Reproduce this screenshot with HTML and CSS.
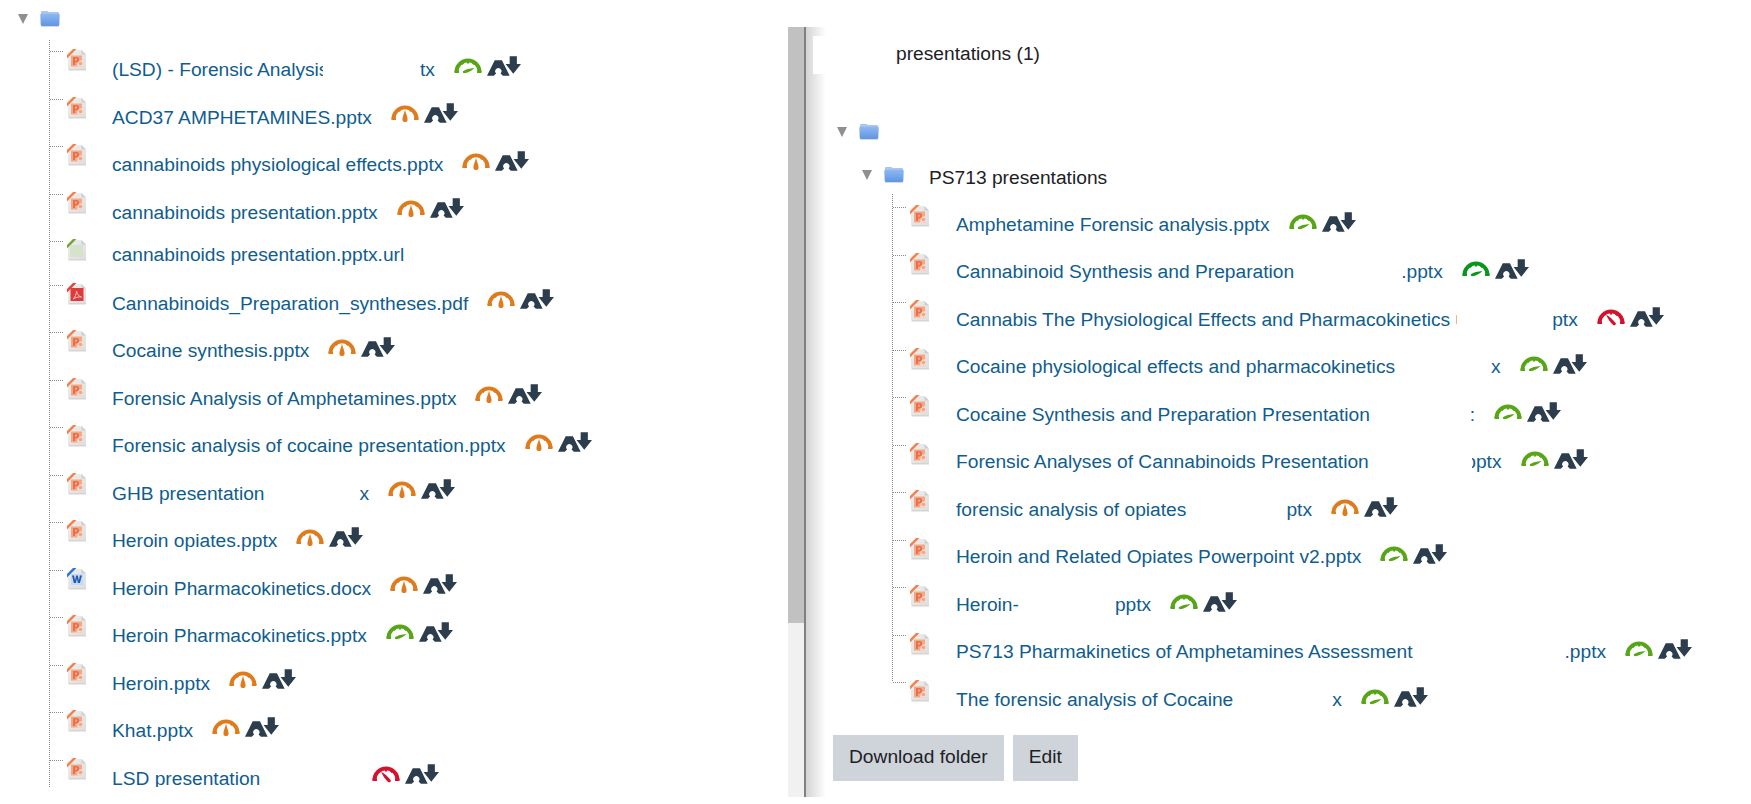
FILE: index.html
```html
<!DOCTYPE html>
<html lang="en">
<head>
    <meta charset="UTF-8">
    <meta name="viewport" content="width=device-width, initial-scale=1.0">
    <title>Folder</title>
    <link rel="stylesheet" href="styles.css">
</head>
<body>
    <svg class="defs" width="0" height="0">
        <defs>
            <linearGradient id="folder-body" x1="0" y1="0" x2="0" y2="1">
                <stop offset="0" stop-color="#8fb8f2"/>
                <stop offset="1" stop-color="#5f95e2"/>
            </linearGradient>
            <linearGradient id="file-page" x1="0" y1="0" x2="1" y2="1">
                <stop offset="0" stop-color="#eeeeee"/>
                <stop offset="1" stop-color="#dedede"/>
            </linearGradient>
        </defs>
        <symbol id="folder" viewBox="0 0 20 17">
            <path d="M1 5V2.200C1 1.500 1.500 1 2.200 1h5c.6 0 1 .3 1.300 1h9.300c.7 0 1.200.5 1.200 1.200V5z" fill="#a9c6ee"/>
            <path d="M.3 5c0-.7.5-1.200 1.200-1.200h17c.7 0 1.200.5 1.200 1.200l-.4 9.800c0 .7-.5 1.200-1.200 1.200H1.900c-.7 0-1.200-.5-1.200-1.200z" fill="url(#folder-body)"/>
            <path d="M1 16h18v1H1z" fill="#d5dbe5"/>
        </symbol>
        <symbol id="file-base" viewBox="0 0 20 22">
            <path d="M1 7.500 8 1h6.500L19 5.500V20H1z" fill="url(#file-page)"/>
            <path d="M1.500 20H19v1.500H1.500z" fill="#d4d4d4"/>
            <path d="M14.500 1v4.500H19z" fill="#cfcfcf"/>
        </symbol>
        <symbol id="file-ppt" viewBox="0 0 20 22">
            <use href="#file-base"/>
            <path d="M0 6 6 0h3.500L0 9.500z" fill="#f2814d"/>
            <path d="M4 6.500h11v11H4z" fill="#f6a886"/>
            <path d="M11 11.500h4v6h-5z" fill="#fbdccd"/>
            <path d="M6 8v8h2v-2.600h1.500c1.800 0 2.700-1 2.700-2.700S11.300 8 9.500 8zm2 1.600h1.200c.7 0 1 .4 1 1.100s-.3 1.100-1 1.100H8z" fill="#e8704a"/>
            <circle cx="13.500" cy="14.500" r="1.800" fill="#f4a585"/>
        </symbol>
        <symbol id="file-url" viewBox="0 0 20 22">
            <use href="#file-base"/>
            <path d="M0 6 6 0h3.500L0 9.500z" fill="#6fa53a"/>
            <path d="M3 6h13v12H3z" fill="#d5e3ca"/>
        </symbol>
        <symbol id="file-pdf" viewBox="0 0 20 22">
            <use href="#file-base"/>
            <path d="M0 6 6 0h3.500L0 9.500z" fill="#ea3f3f"/>
            <path d="M3.500 5h13v13h-13z" fill="#dd3a3a"/>
            <path d="M6 16c2-1.500 3.500-5 3.500-8 .5 3 2 5 5 6-3-.3-5.500.2-8.500 2z" fill="none" stroke="#f7c6c6" stroke-width="1"/>
        </symbol>
        <symbol id="file-doc" viewBox="0 0 20 22">
            <use href="#file-base"/>
            <path d="M0 6 6 0h3.500L0 9.500z" fill="#2f76c9"/>
            <path d="M4 6h12v11H4z" fill="#c7d9f2"/>
            <path d="M5 7.500h2l1 5 1.200-5h1.500l1.200 5 1-5h2l-2 7.500h-2l-1-4.500L8.900 15h-2z" fill="#1f57ad"/>
        </symbol>
        <symbol id="gauge-fast" viewBox="0 0 28 18">
            <path d="M2.400 15a11.600 11.600 0 0 1 23.200 0" fill="none" stroke="currentColor" stroke-width="3.800"/>
            <path d="M.5 13.500H5V16H.5zM23 13.500h4.500V16H23zM6 5.500l2-2 2.300 2.500-2 1.900zM12.900 3h2.200v3.400h-2.200zM22 5.500l-2-2-2.300 2.500 2 1.900z" fill="currentColor"/>
            <path d="M10 16.200c-1.300 0-1.700-1.400-.7-2.100 2-1.400 6.500-2.700 11.200-3-2.800 2.700-6.700 5.100-10.500 5.100z" fill="currentColor"/>
        </symbol>
        <symbol id="gauge-mid" viewBox="0 0 28 18">
            <path d="M2.400 15a11.600 11.600 0 0 1 23.200 0" fill="none" stroke="currentColor" stroke-width="3.800"/>
            <path d="M.5 13.500H5V16H.5zM23 13.500h4.500V16H23zM6 5.500l2-2 2.300 2.500-2 1.900zM22 5.500l-2-2-2.300 2.500 2 1.900z" fill="currentColor"/>
            <path d="M14 5.500c.6 3.700 2.600 7.300 2.600 10a2.600 2.600 0 0 1-5.200 0c0-2.700 2-6.300 2.600-10z" fill="currentColor"/>
        </symbol>
        <symbol id="gauge-slow" viewBox="0 0 28 18">
            <path d="M2.400 15a11.600 11.600 0 0 1 23.200 0" fill="none" stroke="currentColor" stroke-width="3.800"/>
            <path d="M.5 13.500H5V16H.5zM23 13.500h4.500V16H23zM12.900 3h2.200v3.400h-2.200zM22 5.500l-2-2-2.300 2.500 2 1.900z" fill="currentColor"/>
            <path d="M9 6.500c3.400 2 7.400 5.500 9.600 8.400 1.100 1.500-1 3.200-2.500 2C13.200 14.700 10.500 10 9 6.500z" fill="currentColor"/>
        </symbol>
        <symbol id="ally" viewBox="0 0 33 19">
            <path d="M0 19 7.500 4h7L22 19h-6.600l-2.200-2.300a3 3 0 1 0-4.400 0L6.600 19z" fill="#2c3e4e"/>
            <path d="M22 0h7v7.500h4L25.500 17 18 7.500h4z" fill="#2c3e4e"/>
        </symbol>
    </svg>

    <div class="page">
        <main class="pane">
            <div class="folder-row">
                <span class="twisty"></span>
                <svg class="folder"><use href="#folder"/></svg>
            </div>
            <ul class="tree">
                <li class="item">
                    <svg class="ficon"><use href="#file-ppt"/></svg>
                    <div class="line">
                        <a class="name cut-lsd" href="#">(LSD) - Forensic Analysis</a><a class="name gap-97" href="#">tx</a>
                        <svg class="gauge green"><use href="#gauge-fast"/></svg>
                        <svg class="ally"><use href="#ally"/></svg>
                    </div>
                </li>
                <li class="item">
                    <svg class="ficon"><use href="#file-ppt"/></svg>
                    <div class="line">
                        <a class="name" href="#">ACD37 AMPHETAMINES.pptx</a>
                        <svg class="gauge orange"><use href="#gauge-mid"/></svg>
                        <svg class="ally"><use href="#ally"/></svg>
                    </div>
                </li>
                <li class="item">
                    <svg class="ficon"><use href="#file-ppt"/></svg>
                    <div class="line">
                        <a class="name" href="#">cannabinoids physiological effects.pptx</a>
                        <svg class="gauge orange"><use href="#gauge-mid"/></svg>
                        <svg class="ally"><use href="#ally"/></svg>
                    </div>
                </li>
                <li class="item">
                    <svg class="ficon"><use href="#file-ppt"/></svg>
                    <div class="line">
                        <a class="name" href="#">cannabinoids presentation.pptx</a>
                        <svg class="gauge orange"><use href="#gauge-mid"/></svg>
                        <svg class="ally"><use href="#ally"/></svg>
                    </div>
                </li>
                <li class="item item-plain">
                    <svg class="ficon"><use href="#file-url"/></svg>
                    <div class="line">
                        <a class="name" href="#">cannabinoids presentation.pptx.url</a>
                    </div>
                </li>
                <li class="item">
                    <svg class="ficon"><use href="#file-pdf"/></svg>
                    <div class="line">
                        <a class="name" href="#">Cannabinoids_Preparation_syntheses.pdf</a>
                        <svg class="gauge orange"><use href="#gauge-mid"/></svg>
                        <svg class="ally"><use href="#ally"/></svg>
                    </div>
                </li>
                <li class="item">
                    <svg class="ficon"><use href="#file-ppt"/></svg>
                    <div class="line">
                        <a class="name" href="#">Cocaine synthesis.pptx</a>
                        <svg class="gauge orange"><use href="#gauge-mid"/></svg>
                        <svg class="ally"><use href="#ally"/></svg>
                    </div>
                </li>
                <li class="item">
                    <svg class="ficon"><use href="#file-ppt"/></svg>
                    <div class="line">
                        <a class="name" href="#">Forensic Analysis of Amphetamines.pptx</a>
                        <svg class="gauge orange"><use href="#gauge-mid"/></svg>
                        <svg class="ally"><use href="#ally"/></svg>
                    </div>
                </li>
                <li class="item">
                    <svg class="ficon"><use href="#file-ppt"/></svg>
                    <div class="line">
                        <a class="name" href="#">Forensic analysis of cocaine presentation.pptx</a>
                        <svg class="gauge orange"><use href="#gauge-mid"/></svg>
                        <svg class="ally"><use href="#ally"/></svg>
                    </div>
                </li>
                <li class="item">
                    <svg class="ficon"><use href="#file-ppt"/></svg>
                    <div class="line">
                        <a class="name" href="#">GHB presentation</a><a class="name gap-95" href="#">x</a>
                        <svg class="gauge orange"><use href="#gauge-mid"/></svg>
                        <svg class="ally"><use href="#ally"/></svg>
                    </div>
                </li>
                <li class="item">
                    <svg class="ficon"><use href="#file-ppt"/></svg>
                    <div class="line">
                        <a class="name" href="#">Heroin opiates.pptx</a>
                        <svg class="gauge orange"><use href="#gauge-mid"/></svg>
                        <svg class="ally"><use href="#ally"/></svg>
                    </div>
                </li>
                <li class="item">
                    <svg class="ficon"><use href="#file-doc"/></svg>
                    <div class="line">
                        <a class="name" href="#">Heroin Pharmacokinetics.docx</a>
                        <svg class="gauge orange"><use href="#gauge-mid"/></svg>
                        <svg class="ally"><use href="#ally"/></svg>
                    </div>
                </li>
                <li class="item">
                    <svg class="ficon"><use href="#file-ppt"/></svg>
                    <div class="line">
                        <a class="name" href="#">Heroin Pharmacokinetics.pptx</a>
                        <svg class="gauge green"><use href="#gauge-fast"/></svg>
                        <svg class="ally"><use href="#ally"/></svg>
                    </div>
                </li>
                <li class="item">
                    <svg class="ficon"><use href="#file-ppt"/></svg>
                    <div class="line">
                        <a class="name" href="#">Heroin.pptx</a>
                        <svg class="gauge orange"><use href="#gauge-mid"/></svg>
                        <svg class="ally"><use href="#ally"/></svg>
                    </div>
                </li>
                <li class="item">
                    <svg class="ficon"><use href="#file-ppt"/></svg>
                    <div class="line">
                        <a class="name" href="#">Khat.pptx</a>
                        <svg class="gauge orange"><use href="#gauge-mid"/></svg>
                        <svg class="ally"><use href="#ally"/></svg>
                    </div>
                </li>
                <li class="item">
                    <svg class="ficon"><use href="#file-ppt"/></svg>
                    <div class="line">
                        <a class="name" href="#">LSD presentation</a>
                        <svg class="gauge red gauge-far"><use href="#gauge-slow"/></svg>
                        <svg class="ally"><use href="#ally"/></svg>
                    </div>
                </li>
            </ul>
        </main>

        <div class="scrollbar"><div class="thumb"></div></div>

        <aside class="drawer">
            <div class="drawer-title"><h2 class="title">presentations (1)</h2></div>
            <div class="folder-row folder-root">
                <span class="twisty"></span>
                <svg class="folder"><use href="#folder"/></svg>
            </div>
            <div class="folder-row folder-sub">
                <span class="twisty"></span>
                <svg class="folder"><use href="#folder"/></svg>
                <span class="folder-name">PS713 presentations</span>
            </div>
            <ul class="tree tree-sub">
                <li class="item">
                    <svg class="ficon"><use href="#file-ppt"/></svg>
                    <div class="line">
                        <a class="name" href="#">Amphetamine Forensic analysis.pptx</a>
                        <svg class="gauge green"><use href="#gauge-fast"/></svg>
                        <svg class="ally"><use href="#ally"/></svg>
                    </div>
                </li>
                <li class="item">
                    <svg class="ficon"><use href="#file-ppt"/></svg>
                    <div class="line">
                        <a class="name" href="#">Cannabinoid Synthesis and Preparation</a><a class="name gap-107" href="#">.pptx</a>
                        <svg class="gauge dark-green"><use href="#gauge-fast"/></svg>
                        <svg class="ally"><use href="#ally"/></svg>
                    </div>
                </li>
                <li class="item">
                    <svg class="ficon"><use href="#file-ppt"/></svg>
                    <div class="line">
                        <a class="name" href="#">Cannabis The Physiological Effects and Pharmacokinetics</a><span class="sliver"></span><a class="name gap-95" href="#">ptx</a>
                        <svg class="gauge red"><use href="#gauge-slow"/></svg>
                        <svg class="ally"><use href="#ally"/></svg>
                    </div>
                </li>
                <li class="item">
                    <svg class="ficon"><use href="#file-ppt"/></svg>
                    <div class="line">
                        <a class="name" href="#">Cocaine physiological effects and pharmacokinetics</a><a class="name gap-96" href="#">x</a>
                        <svg class="gauge green"><use href="#gauge-fast"/></svg>
                        <svg class="ally"><use href="#ally"/></svg>
                    </div>
                </li>
                <li class="item">
                    <svg class="ficon"><use href="#file-ppt"/></svg>
                    <div class="line">
                        <a class="name gap-end" href="#">Cocaine Synthesis and Preparation Presentation</a><a class="name" href="#">:</a>
                        <svg class="gauge green"><use href="#gauge-fast"/></svg>
                        <svg class="ally"><use href="#ally"/></svg>
                    </div>
                </li>
                <li class="item">
                    <svg class="ficon"><use href="#file-ppt"/></svg>
                    <div class="line">
                        <a class="name" href="#">Forensic Analyses of Cannabinoids Presentation</a><a class="name gap-103 cut-left" href="#">pptx</a>
                        <svg class="gauge green"><use href="#gauge-fast"/></svg>
                        <svg class="ally"><use href="#ally"/></svg>
                    </div>
                </li>
                <li class="item">
                    <svg class="ficon"><use href="#file-ppt"/></svg>
                    <div class="line">
                        <a class="name gap-end" href="#">forensic analysis of opiates</a><a class="name" href="#">ptx</a>
                        <svg class="gauge orange"><use href="#gauge-mid"/></svg>
                        <svg class="ally"><use href="#ally"/></svg>
                    </div>
                </li>
                <li class="item">
                    <svg class="ficon"><use href="#file-ppt"/></svg>
                    <div class="line">
                        <a class="name" href="#">Heroin and Related Opiates Powerpoint v2.pptx</a>
                        <svg class="gauge green"><use href="#gauge-fast"/></svg>
                        <svg class="ally"><use href="#ally"/></svg>
                    </div>
                </li>
                <li class="item">
                    <svg class="ficon"><use href="#file-ppt"/></svg>
                    <div class="line">
                        <a class="name" href="#">Heroin-</a><a class="name gap-96" href="#">pptx</a>
                        <svg class="gauge green"><use href="#gauge-fast"/></svg>
                        <svg class="ally"><use href="#ally"/></svg>
                    </div>
                </li>
                <li class="item">
                    <svg class="ficon"><use href="#file-ppt"/></svg>
                    <div class="line">
                        <a class="name" href="#">PS713 Pharmakinetics of Amphetamines Assessment</a><a class="name gap-152" href="#">.pptx</a>
                        <svg class="gauge green"><use href="#gauge-fast"/></svg>
                        <svg class="ally"><use href="#ally"/></svg>
                    </div>
                </li>
                <li class="item">
                    <svg class="ficon"><use href="#file-ppt"/></svg>
                    <div class="line">
                        <a class="name" href="#">The forensic analysis of Cocaine</a><a class="name gap-99" href="#">x</a>
                        <svg class="gauge green"><use href="#gauge-fast"/></svg>
                        <svg class="ally"><use href="#ally"/></svg>
                    </div>
                </li>
            </ul>
            <div class="actions">
                <button class="btn">Download folder</button>
                <button class="btn">Edit</button>
            </div>
        </aside>
    </div>
</body>
</html>
```
FILE: styles.css
```css
* {
    box-sizing: border-box;
}
html, body {
    margin: 0;
    padding: 0;
    background: #fff;
    overflow: hidden;
}
body {
    font-family: "Liberation Sans", Arial, sans-serif;
    font-size: 19.2px;
    color: #1d2125;
}
.defs {
    position: absolute;
}
.page {
    display: flex;
    width: 1751px;
    height: 797px;
}

/* left pane, the tree is cut off by the pane */
.pane {
    width: 788px;
    height: 787px;
    overflow: hidden;
    flex: none;
}
.scrollbar {
    flex: none;
    width: 16px;
    margin-top: 27px;
    background: #f1f1f1;
}
.thumb {
    height: 596px;
    background: #c1c1c1;
}
.drawer {
    flex: 1;
    margin-top: 27px;
    border-left: 2px solid #808080;
    background: linear-gradient(to right, #d4d4d4, #fff 20px);
    min-width: 0;
}
.drawer-title {
    margin: 9px 0 0 7px;
    height: 38px;
    background: #fff;
    padding: 0 0 2px 83px;
    display: flex;
    align-items: center;
}
.title {
    margin: 0;
    font-size: 19.2px;
    font-weight: normal;
    line-height: 1;
}

.folder-row {
    display: flex;
    align-items: center;
    height: 17px;
}
.twisty {
    width: 0;
    height: 0;
    border-left: 5px solid transparent;
    border-right: 5px solid transparent;
    border-top: 10px solid #8f8f8f;
}
.folder {
    width: 20px;
    height: 17px;
    margin-left: 12px;
}
.pane > .folder-row {
    margin: 10px 0 0 18px;
}
.folder-root {
    margin: 49px 0 0 31px;
}
.folder-sub {
    margin: 26px 0 0 56px;
}
.folder-name {
    margin: 6px 0 0 25px;
    white-space: nowrap;
}

.tree {
    list-style: none;
    margin: 13px 0 0 49px;
    padding: 9px 0 0;
    border-left: 1px dotted #8a8a8a;
}
.tree-sub {
    margin: 11px 0 0 86px;
    padding-top: 11px;
    height: 487px;
}
.item {
    position: relative;
    display: flex;
    height: 47.5px;
    padding-left: 17px;
    align-items: flex-start;
}
.item::before {
    content: "";
    position: absolute;
    left: 0;
    top: 2px;
    width: 13px;
    border-top: 1px dotted #8a8a8a;
}
.item-plain {
    height: 43.5px;
}
.ficon {
    flex: none;
    width: 20px;
    height: 22px;
}
.line {
    display: flex;
    align-items: center;
    height: 27px;
    margin: 7px 0 0 25px;
    white-space: nowrap;
}
.tree-sub .line {
    margin: 5.8px 0 0 26px;
}
.item-plain .line {
    margin-top: 2px;
}
.name {
    color: #0f5d8f;
    text-decoration: none;
    line-height: 27px;
}

/* redacted bits of the file names */
.cut-lsd {
    display: inline-block;
    width: 211px;
    overflow: hidden;
}
.cut-left {
    display: inline-block;
    width: 30px;
    overflow: hidden;
    text-indent: -6.5px;
}
.sliver {
    width: 1px;
    height: 9px;
    margin-left: 6px;
    background: #e8b795;
}
.gap-95 { margin-left: 95px; }
.gap-96 { margin-left: 96px; }
.gap-97 { margin-left: 97px; }
.gap-99 { margin-left: 99px; }
.gap-103 { margin-left: 103px; }
.gap-107 { margin-left: 107px; }
.gap-152 { margin-left: 152px; }
.gap-end { margin-right: 100px; }

.gauge {
    flex: none;
    width: 28px;
    height: 18px;
    margin: 0 0 8px 19px;
}
.gauge-far {
    margin-left: 112px;
}
.green { color: #57a615; }
.dark-green { color: #06971c; }
.orange { color: #e07b1c; }
.red { color: #d6112c; }
.ally {
    flex: none;
    width: 34px;
    height: 20px;
    margin: 0 0 8px 5px;
}
.tree-sub .gauge,
.tree-sub .ally {
    margin-bottom: 5.6px;
}

.actions {
    display: flex;
    gap: 9px;
    margin: 53.5px 0 0 27px;
}
.btn {
    height: 46px;
    padding: 0 16px 2px;
    border: 0;
    background: #ced4da;
    color: #1d2125;
    font: inherit;
}
```
